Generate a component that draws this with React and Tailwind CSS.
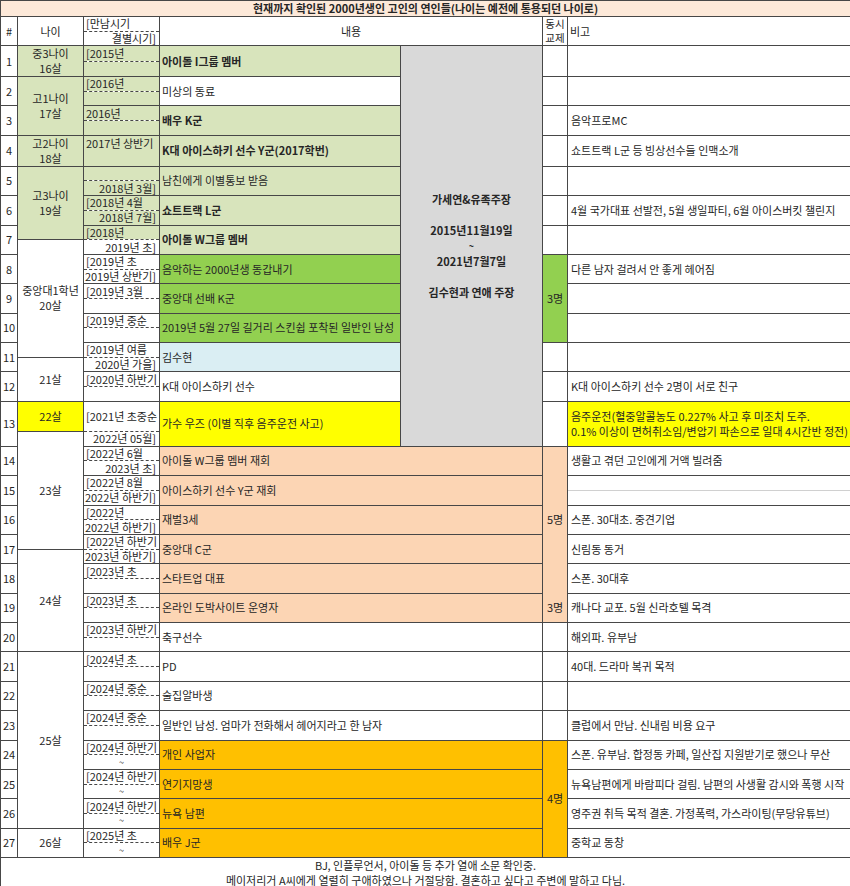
import React from 'react';

// spreadsheet colours
const BG = {
  w: 'bg-white',
  lg: 'bg-[#d8e4bc]',
  g: 'bg-[#92d050]',
  blue: 'bg-[#daeef3]',
  y: 'bg-[#ffff00]',
  gray: 'bg-[#d9d9d9]',
  salmon: 'bg-[#fcd5b4]',
  orange: 'bg-[#ffc000]',
};

// one entry per numbered row: [meet top, meet bottom], content, note
const ROWS = [
  { meet: ['[2015년', ''], text: '아이돌 I그룹 멤버', bold: true, bg: 'lg', note: '' },
  { meet: ['[2016년', ''], text: '미상의 동료', bg: 'w', note: '' },
  { meet: ['2016년', ''], text: '배우 K군', bold: true, bg: 'lg', note: '음악프로MC' },
  { meet: ['2017년 상반기', ''], noDash: true, text: 'K대 아이스하키 선수 Y군(2017학번)', bold: true, bg: 'lg', note: '쇼트트랙 L군 등 빙상선수들 인맥소개' },
  { meet: ['', '2018년 3월]'], text: '남친에게 이별통보 받음', bg: 'lg', note: '' },
  { meet: ['[2018년 4월', '2018년 7월]'], text: '쇼트트랙 L군', bold: true, bg: 'lg', note: '4월 국가대표 선발전, 5월 생일파티, 6월 아이스버킷 챌린지' },
  { meet: ['[2018년', '2019년 초]'], text: '아이돌 W그룹 멤버', bold: true, bg: 'lg', note: '' },
  { meet: ['[2019년 초', '2019년 상반기]'], text: '음악하는 2000년생 동갑내기', bg: 'g', note: '다른 남자 걸려서 안 좋게 헤어짐' },
  { meet: ['[2019년 3월', ''], text: '중앙대 선배 K군', bg: 'g', note: '' },
  { meet: ['[2019년 중순', ''], text: '2019년 5월 27일 길거리 스킨쉽 포착된 일반인 남성', bg: 'g', note: '' },
  { meet: ['[2019년 여름', '2020년 가을]'], text: '김수현', bg: 'blue', note: '' },
  { meet: ['[2020년 하반기', ''], text: 'K대 아이스하키 선수', bg: 'w', note: 'K대 아이스하키 선수 2명이 서로 친구' },
  {
    meet: ['[2021년 초중순', '2022년 05월]'], text: '가수 우즈 (이별 직후 음주운전 사고)', bg: 'y', noteBg: 'y',
    note: ['음주운전(혈중알콜농도 0.227% 사고 후 미조치 도주.', '0.1% 이상이 면허취소임/변압기 파손으로 일대 4시간반 정전)'],
  },
  { meet: ['[2022년 6월', '2023년 초]'], text: '아이돌 W그룹 멤버 재회', bg: 'salmon', note: '생활고 겪던 고인에게 거액 빌려줌' },
  { meet: ['[2022년 8월', '2022년 하반기]'], text: '아이스하키 선수 Y군 재회', bg: 'salmon', note: '', splitNote: true },
  { meet: ['[2022년', '2022년 하반기]'], text: '재벌3세', bg: 'salmon', note: '스폰. 30대초. 중견기업' },
  { meet: ['[2022년 하반기', '2023년 하반기]'], text: '중앙대 C군', bg: 'salmon', note: '신림동 동거' },
  { meet: ['[2023년 초', ''], text: '스타트업 대표', bg: 'salmon', note: '스폰. 30대후' },
  { meet: ['[2023년 초', ''], text: '온라인 도박사이트 운영자', bg: 'salmon', note: '캐나다 교포. 5월 신라호텔 목격' },
  { meet: ['[2023년 하반기', ''], text: '축구선수', bg: 'w', note: '해외파. 유부남' },
  { meet: ['[2024년 초', ''], text: 'PD', bg: 'w', note: '40대. 드라마 복귀 목적' },
  { meet: ['[2024년 중순', ''], text: '술집알바생', bg: 'w', note: '' },
  { meet: ['[2024년 중순', ''], text: '일반인 남성. 엄마가 전화해서 헤어지라고 한 남자', bg: 'w', note: '클럽에서 만남. 신내림 비용 요구' },
  { meet: ['[2024년 하반기', '~'], text: '개인 사업자', bg: 'orange', note: '스폰. 유부남. 합정동 카페, 일산집 지원받기로 했으나 무산' },
  { meet: ['[2024년 하반기', '~'], text: '연기지망생', bg: 'orange', note: '뉴욕남편에게 바람피다 걸림. 남편의 사생활 감시와 폭행 시작' },
  { meet: ['[2024년 하반기', '~'], text: '뉴욕 남편', bg: 'orange', note: '영주권 취득 목적 결혼. 가정폭력, 가스라이팅(무당유튜브)' },
  { meet: ['[2025년 초', '~'], text: '배우 J군', bg: 'orange', note: '중학교 동창' },
];

// merged 나이 cells, indexed by half-row (row n top half = 2(n-1))
const AGES = [
  { at: 0, span: 2, lines: ['중3나이', '16살'], bg: 'lg' },
  { at: 2, span: 4, lines: ['고1나이', '17살'], bg: 'lg' },
  { at: 6, span: 2, lines: ['고2나이', '18살'], bg: 'lg' },
  { at: 8, span: 5, lines: ['고3나이', '19살'], bg: 'lg' },
  { at: 13, span: 8, lines: ['중앙대1학년', '20살'], bg: 'w' },
  { at: 21, span: 3, lines: ['21살'], bg: 'w' },
  { at: 24, span: 1, lines: ['22살'], bg: 'y' },
  { at: 25, span: 8, lines: ['23살'], bg: 'w' },
  { at: 33, span: 7, lines: ['24살'], bg: 'w' },
  { at: 40, span: 12, lines: ['25살'], bg: 'w' },
  { at: 52, span: 2, lines: ['26살'], bg: 'w' },
];

// 동시교제 column
const TOGETHER = [
  ...[0, 2, 4, 6, 8, 10, 12].map(at => ({ at, span: 2, bg: 'w' })),
  { at: 14, span: 6, text: '3명', bg: 'g' },
  ...[20, 22, 24].map(at => ({ at, span: 2, bg: 'w' })),
  { at: 26, span: 10, text: '5명', bg: 'salmon', edge: 'border-b-0' },
  { at: 36, span: 2, text: '3명', bg: 'salmon', edge: 'border-t-0' },
  ...[38, 40, 42, 44].map(at => ({ at, span: 2, bg: 'w' })),
  { at: 46, span: 8, text: '4명', bg: 'orange' },
];

const cell = 'border border-[#474747] p-0 leading-[13px] overflow-hidden whitespace-nowrap';

const App = () => {
  const trs = [];

  ROWS.forEach((row, i) => {
    const n = i + 1;
    const a = i * 2;
    const b = a + 1;
    const top = [];
    const bottom = [];

    const heights = n === 13 ? ['h-[30px]', 'h-[15px]'] : ['h-[14.7px]', 'h-[14.7px]'];

    top.push(<td key="no" rowSpan={2} className={`${cell} text-center`}>{n}</td>);

    [[a, top], [b, bottom]].forEach(([idx, list]) => {
      const age = AGES.find(x => x.at === idx);
      if (age) {
        list.push(
          <td key="age" rowSpan={age.span} className={`${cell} ${BG[age.bg]} text-center leading-[15px]`}>
            {age.lines.map(l => <div key={l}>{l}</div>)}
          </td>
        );
      }
    });

    // 만남/결별 half cells with dashed split
    const meetBg = a <= 12 ? BG.lg : BG.w;
    const meetBgB = b <= 12 ? BG.lg : BG.w;
    top.push(
      <td key="m1" className={`${cell} ${meetBg} pl-[2px] text-left ${row.noDash ? 'border-b-0' : 'border-dashed border-[#8c8c8c]'}`}>
        {row.meet[0]}
      </td>
    );
    bottom.push(
      <td key="m2" className={`${cell} ${meetBgB} border-t-0 ${row.meet[1] === '~' ? 'text-center text-[9px]' : 'text-right pr-[3px]'}`}>
        {row.meet[1]}
      </td>
    );

    top.push(
      <td key="txt" rowSpan={2} colSpan={n >= 14 ? 2 : 1} className={`${cell} ${BG[row.bg]} pl-[2px] ${row.bold ? 'font-bold' : ''}`}>
        {row.text}
      </td>
    );

    if (n === 1) {
      top.push(
        <td key="claim" rowSpan={26} className={`${cell} ${BG.gray} text-center font-bold leading-[15.5px]`}>
          <div>가세연&amp;유족주장</div>
          <div>&nbsp;</div>
          <div>2015년11월19일</div>
          <div className="text-[9px]">~</div>
          <div>2021년7월7일</div>
          <div>&nbsp;</div>
          <div>김수현과 연애 주장</div>
        </td>
      );
    }

    [[a, top], [b, bottom]].forEach(([idx, list]) => {
      const t = TOGETHER.find(x => x.at === idx);
      if (t) {
        list.push(
          <td key="tg" rowSpan={t.span} className={`${cell} ${BG[t.bg]} ${t.edge || ''} text-center`}>
            {t.text}
          </td>
        );
      }
    });

    if (row.splitNote) {
      top.push(<td key="n1" className={`${cell} border-b-[#d0d0d0] bg-white`} />);
      bottom.push(<td key="n2" className={`${cell} border-t-0 bg-white`} />);
    } else {
      top.push(
        <td key="note" rowSpan={2} className={`${cell} ${BG[row.noteBg || 'w']} pl-[3px] leading-[15px]`}>
          {Array.isArray(row.note) ? row.note.map(l => <div key={l}>{l}</div>) : row.note}
        </td>
      );
    }

    trs.push(<tr key={`${n}a`} className={heights[0]}>{top}</tr>);
    trs.push(<tr key={`${n}b`} className={heights[1]}>{bottom}</tr>);
  });

  return (
    <div className="w-[850px] bg-white text-[11px] text-[#262626] font-['Noto_Sans_CJK_KR','Noto_Sans',sans-serif]">
      <table className="w-[850px] table-fixed border-collapse">
        <colgroup>
          <col className="w-[17px]" />
          <col className="w-[66px]" />
          <col className="w-[76px]" />
          <col className="w-[241px]" />
          <col className="w-[142px]" />
          <col className="w-[25px]" />
          <col className="w-[283px]" />
        </colgroup>
        <tbody>
          {/* 제목 */}
          <tr className="h-[16px]">
            <td colSpan={7} className={`${cell} bg-[#fde9d9] text-center font-bold`}>
              현재까지 확인된 2000년생인 고인의 연인들(나이는 예전에 통용되던 나이로)
            </td>
          </tr>

          {/* 헤더 */}
          <tr className="h-[14.5px]">
            <td rowSpan={2} className={`${cell} text-center`}>#</td>
            <td rowSpan={2} className={`${cell} text-center`}>나이</td>
            <td className={`${cell} pl-[2px] border-dashed border-[#8c8c8c]`}>[만남시기</td>
            <td rowSpan={2} colSpan={2} className={`${cell} text-center`}>내용</td>
            <td rowSpan={2} className={`${cell} text-center text-[10.5px] leading-[14px]`}>
              <div>동시</div>
              <div>교제</div>
            </td>
            <td rowSpan={2} className={`${cell} pl-[2px]`}>비고</td>
          </tr>
          <tr className="h-[14.5px]">
            <td className={`${cell} border-t-0 text-right pr-[3px]`}>결별시기]</td>
          </tr>

          {trs}

          {/* 하단 메모 */}
          <tr className="h-[29px]">
            <td colSpan={7} className={`${cell} text-center leading-[14.5px]`}>
              <div>BJ, 인플루언서, 아이돌 등 추가 열애 소문 확인중.</div>
              <div>메이저리거 A씨에게 열렬히 구애하였으나 거절당함. 결혼하고 싶다고 주변에 말하고 다님.</div>
            </td>
          </tr>
        </tbody>
      </table>
    </div>
  );
};

export default App;
